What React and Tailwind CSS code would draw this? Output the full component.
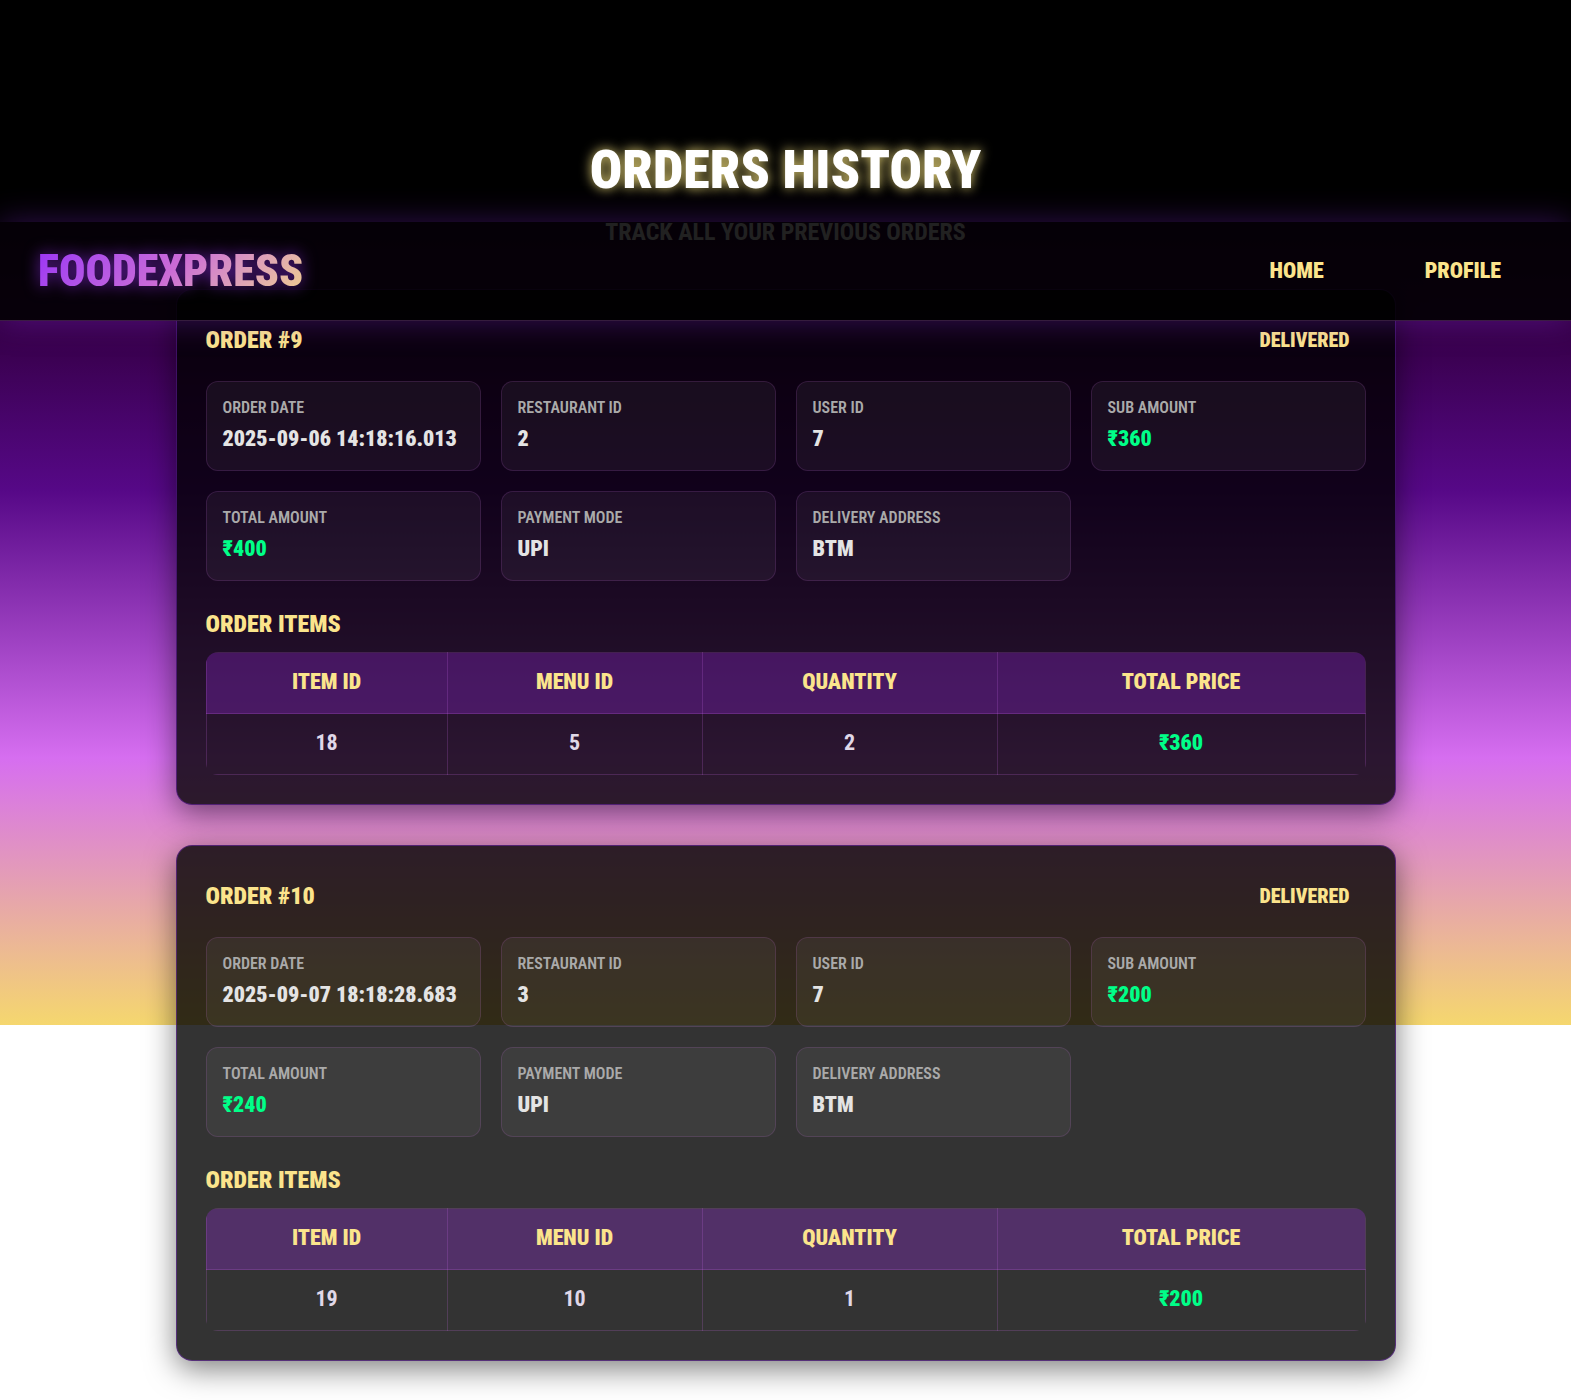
const ORDERS = [
  {
    id: 9,
    status: 'Delivered',
    details: [
      ['Order Date', '2025-09-06 14:18:16.013'],
      ['Restaurant ID', '2'],
      ['User ID', '7'],
      ['Sub Amount', '₹360'],
      ['Total Amount', '₹400'],
      ['Payment Mode', 'UPI'],
      ['Delivery Address', 'BTM'],
    ],
    items: [['18', '5', '2', '₹360']],
  },
  {
    id: 10,
    status: 'Delivered',
    details: [
      ['Order Date', '2025-09-07 18:18:28.683'],
      ['Restaurant ID', '3'],
      ['User ID', '7'],
      ['Sub Amount', '₹200'],
      ['Total Amount', '₹240'],
      ['Payment Mode', 'UPI'],
      ['Delivery Address', 'BTM'],
    ],
    items: [['19', '10', '1', '₹200']],
  },
];

const COLUMNS = [
  ['Item ID', 'w-[241px]'],
  ['Menu ID', 'w-[255px]'],
  ['Quantity', 'w-[295px]'],
  ['Total Price', 'w-auto'],
];

const isMoney = (value) => value.startsWith('₹');

function NavBar() {
  return (
    <nav className="absolute inset-x-0 top-[222px] z-10 flex h-[99px] items-center justify-between border-b border-[#d36eee]/25 bg-black/85 px-[38px] shadow-[0_0_30px_rgba(138,43,226,0.35)]">
      <a
        href="#home"
        className="bg-linear-135 from-[#9b30f5] via-[#cb6bd6] to-[#f0cf8a] bg-clip-text text-[44px] leading-[52px] font-black text-transparent drop-shadow-[0_0_8px_rgba(155,48,255,0.6)]"
      >
        FoodExpress
      </a>
      <div className="flex gap-[37px] text-[22px] leading-7 font-black text-[#fbe48c]">
        <a href="#home" className="px-8">Home</a>
        <a href="#profile" className="px-8">Profile</a>
      </div>
    </nav>
  );
}

function OrderCard({ order }) {
  return (
    <article className="rounded-2xl border border-[#8a2be2]/40 bg-black/80 p-[29px] shadow-[0_8px_30px_rgba(0,0,0,0.5)]">
      <header className="mb-5 flex h-[42px] items-center justify-between font-black text-[#fbe48c]">
        <h2 className="text-2xl">Order #{order.id}</h2>
        <span className="px-4 text-xl">{order.status}</span>
      </header>
      <dl className="grid grid-cols-4 gap-5">
        {order.details.map(([label, value]) => (
          <div key={label} className="h-[90px] rounded-xl border border-[#d36eee]/15 bg-white/5 px-4 pt-[14px]">
            <dt className="text-base font-semibold text-[#aaa]">{label}</dt>
            <dd className={isMoney(value) ? 'mt-1 text-[22px] leading-[30px] font-black whitespace-nowrap text-[#00ff88]' : 'mt-1 text-[22px] leading-[30px] font-black whitespace-nowrap text-[#e4e4e4]'}>
              {value}
            </dd>
          </div>
        ))}
      </dl>
      <h3 className="mt-[27px] mb-3 text-2xl font-black text-[#fbe48c]">Order Items</h3>
      <div className="overflow-hidden rounded-xl">
        <table className="w-full table-fixed border-collapse text-center text-[22px] leading-7">
          <thead className="bg-[#9b2be6]/30 text-[#fbe48c]">
            <tr>
              {COLUMNS.map(([name, width]) => (
                <th key={name} scope="col" className={`${width} h-[61px] border border-[#d36eee]/20 pb-0.5 font-black`}>{name}</th>
              ))}
            </tr>
          </thead>
          <tbody>
            {order.items.map((row) => (
              <tr key={row[0]}>
                {row.map((value, i) => (
                  <td key={i} className={isMoney(value) ? 'h-[61px] border border-[#d36eee]/20 pb-0.5 font-black text-[#00ff88]' : 'h-[61px] border border-[#d36eee]/20 pb-0.5 text-[#e0d8e8]'}>
                    {value}
                  </td>
                ))}
              </tr>
            ))}
          </tbody>
        </table>
      </div>
    </article>
  );
}

export default function App() {
  return (
    <div className="relative bg-white bg-[linear-gradient(to_bottom,#000_0px,#000_222px,#24002e_222px,#38004c_340px,#560887_490px,#d66ef0_758px,#f5d76e_1025px,transparent_1025px)] pb-10 font-['Roboto_Condensed','Roboto',sans-serif] font-bold uppercase">
      <NavBar />
      <header className="pt-[136px] text-center">
        <h1 className="text-[54px] leading-[68px] font-black text-white [text-shadow:0_0_12px_rgba(250,230,130,0.9)]">Orders History</h1>
        <p className="mt-3 text-2xl text-[#ddd]">Track all your previous orders</p>
      </header>
      <main className="mx-auto mt-[41px] flex w-full max-w-[1220px] flex-col gap-10">
        {ORDERS.map((order) => (
          <OrderCard key={order.id} order={order} />
        ))}
      </main>
    </div>
  );
}
